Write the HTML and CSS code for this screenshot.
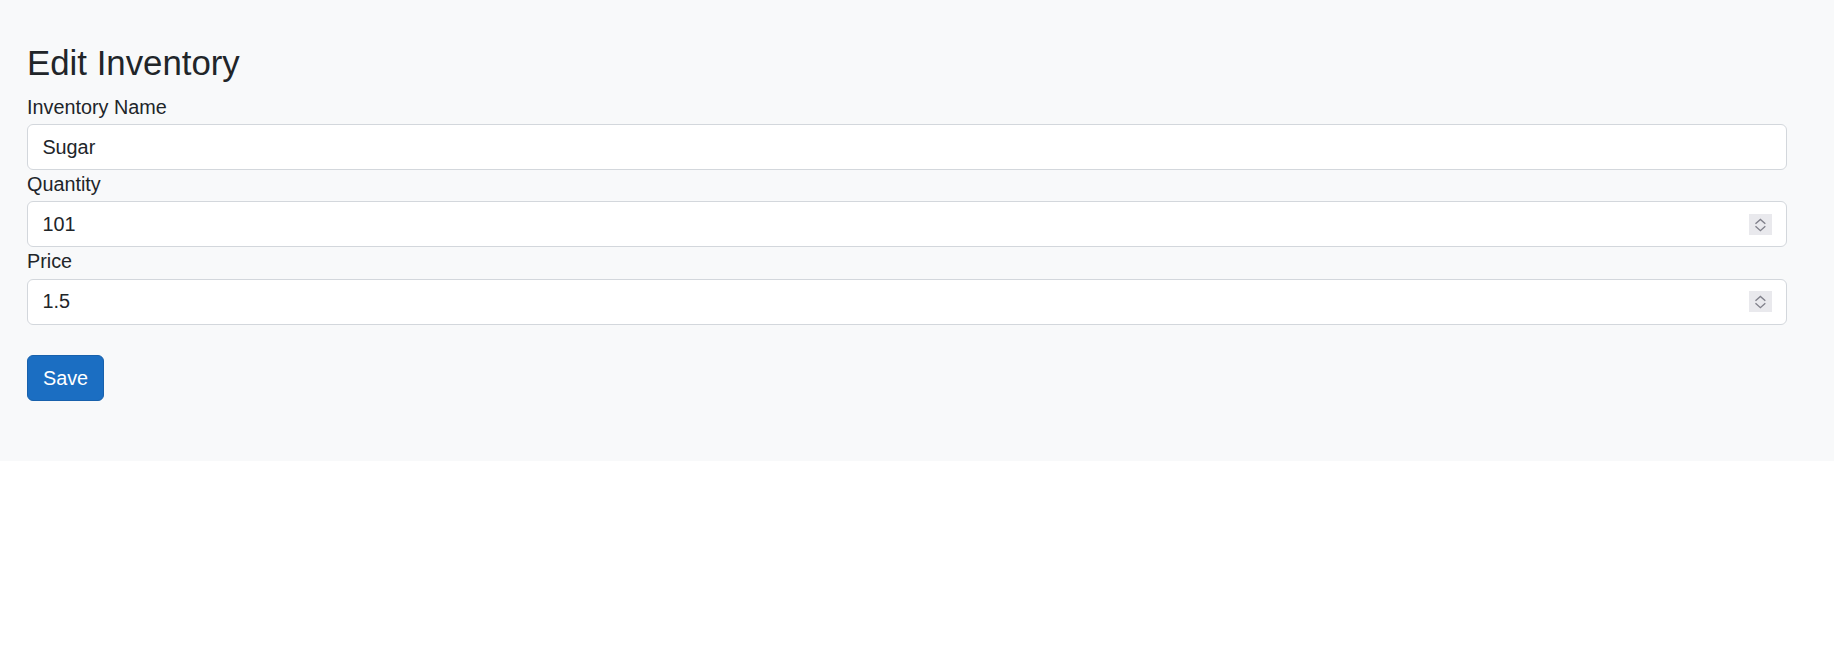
FILE: index.html
```html
<!DOCTYPE html>
<html lang="en">
<head>
<meta charset="utf-8">
<title>Edit Inventory</title>
<link rel="stylesheet" href="styles.css">
</head>
<body>
<div class="page">
  <div class="panel">
    <h3 class="title">Edit Inventory</h3>
    <form class="form">
      <div class="field">
        <label class="label" for="name">Inventory Name</label>
        <input class="control" id="name" type="text" value="Sugar">
      </div>
      <div class="field">
        <label class="label" for="qty">Quantity</label>
        <div class="number-wrap">
          <input class="control" id="qty" type="number" value="101">
          <span class="spinner" aria-hidden="true">
            <svg width="19" height="18" viewBox="0 0 23 22"><path d="M6.5 10 L11.5 5.5 L16.5 10 M6.5 12.5 L11.5 17 L16.5 12.5" fill="none" stroke="#80808b" stroke-width="1.4"/></svg>
          </span>
        </div>
      </div>
      <div class="field">
        <label class="label" for="price">Price</label>
        <div class="number-wrap">
          <input class="control" id="price" type="number" value="1.5" step="0.1">
          <span class="spinner" aria-hidden="true">
            <svg width="19" height="18" viewBox="0 0 23 22"><path d="M6.5 10 L11.5 5.5 L16.5 10 M6.5 12.5 L11.5 17 L16.5 12.5" fill="none" stroke="#80808b" stroke-width="1.4"/></svg>
          </span>
        </div>
      </div>
      <div class="actions">
        <button class="btn-primary" type="submit">Save</button>
      </div>
    </form>
  </div>
</div>
</body>
</html>
```
FILE: styles.css
```css
html, body {
  margin: 0;
  padding: 0;
  background: #ffffff;
}

body {
  font-family: "Liberation Sans", Arial, Helvetica, sans-serif;
  color: #212529;
}

.page {
  background: #f8f9fa;
  zoom: 1.2;
}

.panel {
  padding: 35.8px 39px 49.8px 22.5px;
}

.title {
  margin: 0 0 8px 0;
  font-size: 29px;
  font-weight: 400;
  line-height: 33.6px;
}

.form {
  display: flex;
  flex-direction: column;
}

.field {
  display: flex;
  flex-direction: column;
  align-items: flex-start;
}

.label {
  font-size: 16.5px;
  line-height: 24px;
  margin-bottom: 2px;
}

.number-wrap {
  position: relative;
  width: 100%;
}

.control {
  box-sizing: border-box;
  display: block;
  width: 100%;
  height: 38.4px;
  padding: 6px 12px;
  font-family: inherit;
  font-size: 16.5px;
  line-height: 1.5;
  color: #212529;
  background: #ffffff;
  border: 1px solid #d3d7dc;
  border-radius: 5px;
  margin: 0;
}

.control::-webkit-inner-spin-button,
.control::-webkit-outer-spin-button {
  -webkit-appearance: none;
  margin: 0;
}

.control[type="number"] {
  -moz-appearance: textfield;
}

.spinner {
  position: absolute;
  right: 13px;
  top: 10.2px;
  width: 19px;
  height: 18px;
  background: #e9e9ed;
  display: flex;
  pointer-events: none;
}

.actions {
  margin-top: 25.6px;
}

.btn-primary {
  font-family: inherit;
  font-size: 16.5px;
  line-height: 24.4px;
  padding: 6px 12.5px;
  color: #ffffff;
  background: #1b6ec2;
  border: 1px solid #1861ac;
  border-radius: 5px;
  cursor: pointer;
}
```
